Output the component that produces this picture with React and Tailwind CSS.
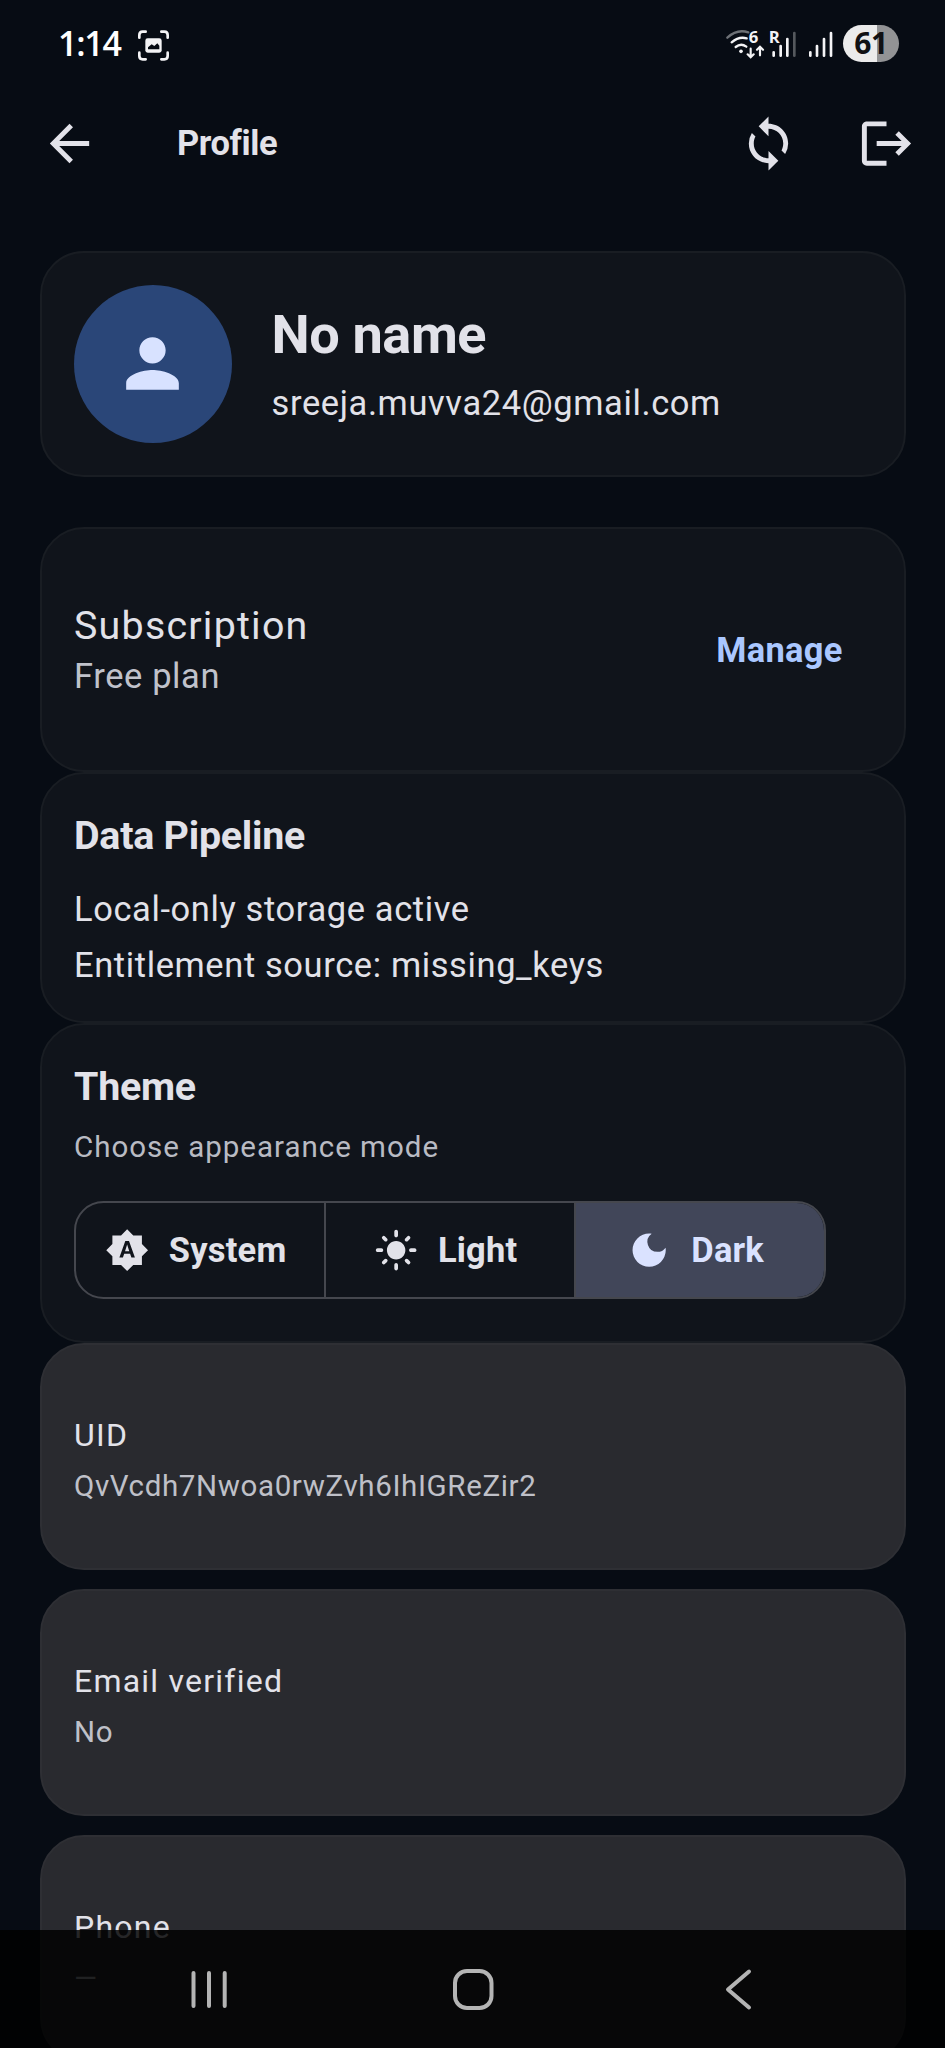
import { useState } from 'react';
import { MdArrowBack, MdBrightnessAuto, MdDarkMode, MdLightMode, MdLogout, MdPerson, MdSync } from 'react-icons/md';

const THEMES = [
  { id: 'system', label: 'System', Icon: MdBrightnessAuto },
  { id: 'light', label: 'Light', Icon: MdLightMode },
  { id: 'dark', label: 'Dark', Icon: MdDarkMode },
];

const DETAILS = [
  { label: 'UID', value: 'QvVcdh7Nwoa0rwZvh6IhIGReZir2' },
  { label: 'Email verified', value: 'No' },
  { label: 'Phone', value: '—' },
];

function StatusBar() {
  return (
    <div className="h-[74px] shrink-0 flex items-start justify-between pl-[58px] pr-[46px] pt-[25px]">
      <div className="flex items-start">
        <span className="w-[80px] font-['Open_Sans'] font-semibold text-[34px] leading-[37px] tracking-[-1.2px] text-white">1:14</span>
        <svg className="mt-[5px]" width="31" height="31" viewBox="414 89 93 93" fill="none" stroke="#f4f4f6" strokeWidth="8" strokeLinecap="round">
          <path d="M418 112v-8q0-10 10-10h9M484 94h9q10 0 10 10v8M503 157v10q0 10-10 10h-9M437 177h-9q-10 0-10-10v-10" />
          <rect x="436" y="114" width="49" height="43" rx="7" fill="#f4f4f6" stroke="none" />
          <path d="M444 147v-6l11-9 8 5 9-8 6 7v11z" fill="#070c14" stroke="none" />
        </svg>
      </div>

      <div className="flex items-start">
        {/* wifi 6 */}
        <svg className="overflow-visible" width="39" height="35" viewBox="77 75 117 105" fill="none" strokeLinecap="round">
          <path d="M81 113Q110 86 144 97" stroke="#6d7176" strokeWidth="7" />
          <path d="M94 127Q116 108 139 115M106 141Q122 128 138 140" stroke="#f4f4f6" strokeWidth="7" />
          <circle cx="122" cy="154" r="5.5" fill="#f4f4f6" />
          <text x="145" y="129" fontSize="50" className="font-['Open_Sans'] font-bold" fill="#f4f4f6">6</text>
          <path d="M151 146v24M142 163l9 9 9-9M179 166v-24M170 149l9-9 9 9" stroke="#f4f4f6" strokeWidth="6.5" />
        </svg>
        {/* roaming signal */}
        <svg className="ml-[4px] overflow-visible" width="28" height="35" viewBox="208 75 84 105" strokeWidth="8" strokeLinecap="round">
          <text x="207" y="129" fontSize="50" className="font-['Open_Sans'] font-bold" fill="#f4f4f6">R</text>
          <path d="M222 157v10M243 138v29M263 117v50" stroke="#f4f4f6" />
          <path d="M284 99v68" stroke="#54585d" />
        </svg>
        <svg className="ml-[11px] mt-[4px]" width="26" height="31" viewBox="325 87 78 93" stroke="#f4f4f6" strokeWidth="8" strokeLinecap="round">
          <path d="M332 157v10M352 138v29M373 117v50M394 99v68" />
        </svg>
        <div className="ml-[9px] w-[56px] h-[37px] rounded-full bg-linear-to-r from-[#ebebeb] from-60% to-[#929395] to-60% text-center font-['Open_Sans'] font-bold text-[30px] leading-[36px] tracking-[-0.5px] text-[#101114]">
          61
        </div>
      </div>
    </div>
  );
}

function Header() {
  return (
    <header className="h-[138px] shrink-0 flex items-center pl-[40px] pr-[29.5px]">
      <button><MdArrowBack className="size-[59px]" /></button>
      <h1 className="ml-[78px] text-[34.46px] leading-[49px] font-bold tracking-[-0.4px]">Profile</h1>
      <button className="ml-auto"><MdSync className="size-[59px]" /></button>
      <button className="ml-[59px]"><MdLogout className="size-[59px]" /></button>
    </header>
  );
}

function Card({ className, children }) {
  return (
    <section className={`shrink-0 rounded-[44px] border-[2.5px] border-[#191d23] bg-[#10141b] px-[32.5px] ${className}`}>
      {children}
    </section>
  );
}

function NavBar() {
  return (
    <nav className="absolute inset-x-0 bottom-0 h-[118px] bg-black/83 flex items-start pl-[190px] pt-[38px] text-[#b4b4b4]">
      <svg width="38" height="42" fill="none" stroke="currentColor" strokeWidth="4" strokeLinecap="round">
        <path d="M3.5 5v33M19 5v33M34.7 5v33" />
      </svg>
      <svg className="ml-[224px]" width="42" height="43" fill="none" stroke="currentColor" strokeWidth="4">
        <rect x="3" y="3" width="36.5" height="37" rx="12" />
      </svg>
      <svg className="ml-[230px]" width="30" height="43" fill="none" stroke="currentColor" strokeWidth="4" strokeLinecap="round" strokeLinejoin="round">
        <path d="M25 3.5L4 21.5l21 18" />
      </svg>
    </nav>
  );
}

export default function App() {
  const [theme, setTheme] = useState('dark');

  return (
    <div className="relative w-[945px] h-[2048px] overflow-hidden flex flex-col bg-[#070c14] font-['Roboto',sans-serif] text-[#e2e2e9]">
      <StatusBar />
      <Header />

      <main className="flex flex-col px-[39.5px] pt-[38.5px]">
        <Card className="h-[226.5px] flex items-center">
          <div className="size-[157.5px] shrink-0 rounded-full bg-[#2a4678] text-[#d8e2ff] flex items-center justify-center">
            <MdPerson className="size-[79px]" />
          </div>
          <div className="ml-[40px] pt-[1px]">
            <h2 className="text-[54.1px] leading-[68px] font-bold tracking-[-0.4px]">No name</h2>
            <p className="mt-[10px] text-[34.46px] leading-[49px] tracking-[0.62px]">sreeja.muvva24@gmail.com</p>
          </div>
        </Card>

        <Card className="mt-[49.5px] h-[245.5px] flex items-center justify-between">
          <div className="pt-[3px]">
            <p className="text-[39.38px] leading-[51px] tracking-[1.23px]">Subscription</p>
            <p className="text-[34.46px] leading-[50px] tracking-[0.62px] text-[#c0c2cb]">Free plan</p>
          </div>
          <button className="mr-[28.5px] pt-[2px] text-[34.46px] leading-[49px] font-bold tracking-[0.25px] text-[#aac7ff]">Manage</button>
        </Card>

        <Card className="h-[251px] pt-[31.5px]">
          <h3 className="text-[39.38px] leading-[59px] font-bold tracking-[-0.25px]">Data Pipeline</h3>
          <p className="mt-[16px] text-[34.46px] leading-[56px] tracking-[0.62px]">Local-only storage active</p>
          <p className="text-[34.46px] leading-[56px] tracking-[0.62px]">Entitlement source: missing_keys</p>
        </Card>

        <Card className="h-[320px] pt-[31.5px]">
          <h3 className="text-[39.38px] leading-[59px] font-bold tracking-[-0.25px]">Theme</h3>
          <p className="mt-[12px] text-[29.53px] leading-[39.5px] tracking-[0.98px] text-[#b9bbc3]">Choose appearance mode</p>
          <div className="mt-[34px] w-[752px] h-[98px] rounded-[29.5px] border-[2.5px] border-[#45474e] flex overflow-hidden">
            {THEMES.map(({ id, label, Icon }, i) => (
              <button
                key={id}
                onClick={() => setTheme(id)}
                className={`flex-1 flex items-center justify-center gap-[20px] pr-[9px] text-[34.46px] font-bold tracking-[0.2px] ${
                  theme === id ? 'bg-[#414659] text-[#dae2ff]' : ''
                } ${i > 0 ? 'border-l-[2.5px] border-[#45474e]' : ''}`}
              >
                <Icon className="size-[44.3px]" />
                <span className="pt-[2px]">{label}</span>
              </button>
            ))}
          </div>
        </Card>

        <div className="flex flex-col gap-[19.5px]">
          {DETAILS.map((row) => (
            <section key={row.label} className="h-[226.5px] shrink-0 rounded-[44px] border-[2.5px] border-[#2e2f34] bg-[#292a2f] px-[32.5px] pt-[66px]">
              <p className="text-[32px] leading-[49.5px] tracking-[1.23px]">{row.label}</p>
              <p className="text-[29.53px] leading-[51px] tracking-[0.62px] text-[#bfc0c8]">{row.value}</p>
            </section>
          ))}
        </div>
      </main>

      <NavBar />
    </div>
  );
}
